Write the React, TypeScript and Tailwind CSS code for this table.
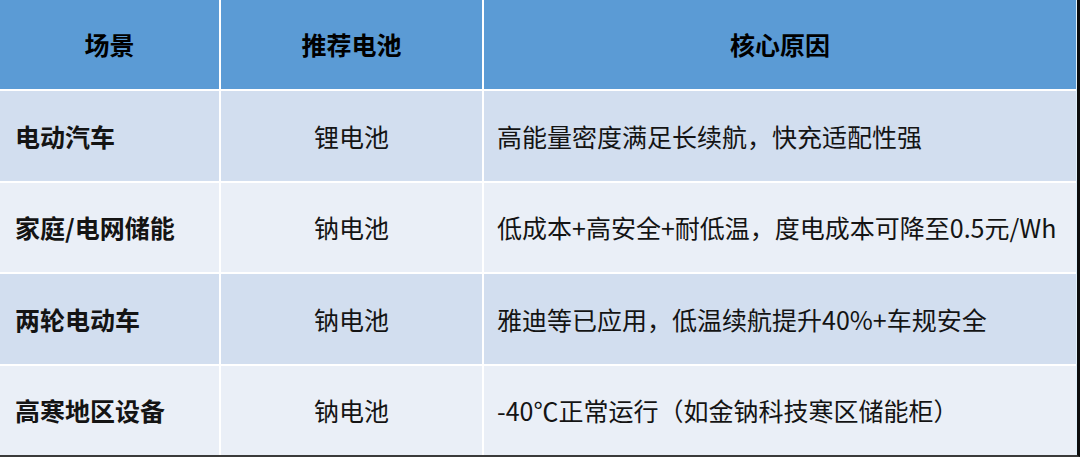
const rows = [
  { scene: '电动汽车', battery: '锂电池', reason: '高能量密度满足长续航，快充适配性强' },
  { scene: '家庭/电网储能', battery: '钠电池', reason: '低成本+高安全+耐低温，度电成本可降至0.5元/Wh' },
  { scene: '两轮电动车', battery: '钠电池', reason: '雅迪等已应用，低温续航提升40%+车规安全' },
  { scene: '高寒地区设备', battery: '钠电池', reason: '-40℃正常运行（如金钠科技寒区储能柜）' },
];

export default function App() {
  return (
    <div
      className="w-[1080px] h-[457px] bg-white overflow-hidden"
      style={{ fontFamily: '"Noto Sans CJK SC", "Noto Sans", sans-serif' }}
    >
      <div className="w-[1080px] border-r-[3px] border-b-2 border-r-[#0d0d0d] border-b-[#3a3a3a] bg-[#dff1fb] pr-px">
        <div className="grid grid-cols-[219px_261px_1fr] gap-[2px] bg-white text-[25px] leading-none text-[#141414]">
          <div className="h-[89px] bg-[#5b9bd5] flex items-center justify-center font-bold text-black">场景</div>
          <div className="h-[89px] bg-[#5b9bd5] flex items-center justify-center font-bold text-black">推荐电池</div>
          <div className="h-[89px] bg-[#5b9bd5] flex items-center justify-center font-bold text-black">核心原因</div>
          {rows.map((r, i) => {
            const bg = i % 2 === 0 ? 'bg-[#d2deef]' : 'bg-[#eaeff7]';
            const h = i % 2 === 0 ? 'h-[90px]' : 'h-[89px]';
            return [
              <div key={`s${i}`} className={`${h} ${bg} flex items-center pl-[15px] font-bold`}>{r.scene}</div>,
              <div key={`b${i}`} className={`${h} ${bg} flex items-center justify-center`}>{r.battery}</div>,
              <div key={`r${i}`} className={`${h} ${bg} flex items-center pl-[13px] whitespace-nowrap`}>{r.reason}</div>,
            ];
          })}
        </div>
      </div>
    </div>
  );
}
